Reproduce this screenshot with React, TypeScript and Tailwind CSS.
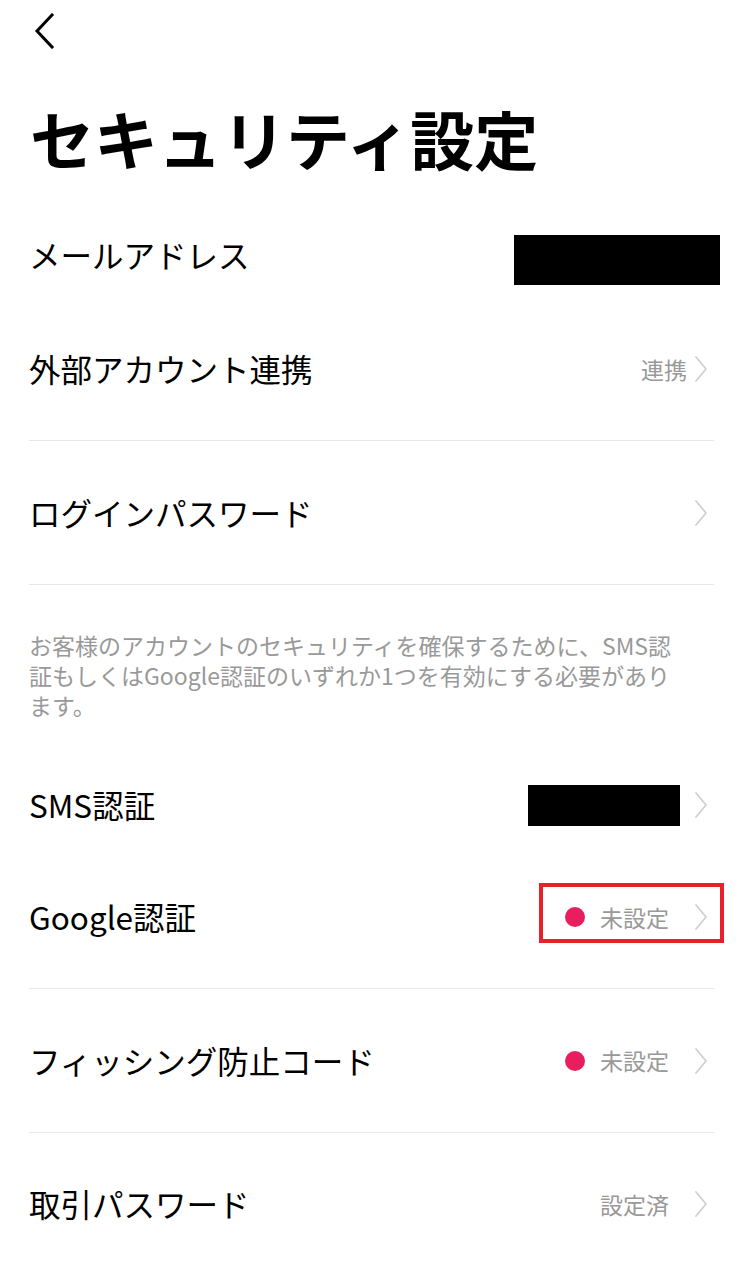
import React from "react";

const font = { fontFamily: '"Noto Sans CJK JP", "Noto Sans", sans-serif' };

function Chevron() {
  return (
    <svg width="16" height="28" viewBox="0 0 16 28" fill="none" className="shrink-0">
      <path d="M3 2 L13 14 L3 26" stroke="#d0d0d0" strokeWidth="1.8" strokeLinecap="round" strokeLinejoin="round" />
    </svg>
  );
}

function Dot() {
  return <span className="inline-block w-[20px] h-[20px] rounded-full bg-[#e91e5f] shrink-0" />;
}

function Divider() {
  return <div className="ml-[29px] mr-[33px] h-px bg-[#e8e8e8]" />;
}

export default function App() {
  return (
    <div className="w-[747px] min-h-[1281px] bg-white text-black" style={font}>
      {/* header */}
      <div className="h-[62px] flex items-center pl-[33px]">
        <svg width="22" height="36" viewBox="0 0 22 36" fill="none">
          <path d="M19 2 L4 18 L19 34" stroke="#000" strokeWidth="3" strokeLinecap="square" />
        </svg>
      </div>
      {/* title */}
      <div className="h-[150px] flex items-center pl-[30px]">
        <h1 className="text-[64px] font-bold leading-none">セキュリティ設定</h1>
      </div>

      {/* email */}
      <div className="h-[86px] flex items-center justify-between pl-[29px] pr-[27px]">
        <span className="text-[31.5px] leading-none">メールアドレス</span>
        <div className="w-[206px] h-[50px] mt-[10px] bg-black" />
      </div>

      {/* external account */}
      <div className="h-[142px] flex items-center justify-between pl-[29px] pr-[38px]">
        <span className="text-[31.5px] leading-none">外部アカウント連携</span>
        <div className="flex items-center gap-[6px]">
          <span className="text-[23px] leading-none text-[#999]">連携</span>
          <Chevron />
        </div>
      </div>
      <Divider />

      {/* login password */}
      <div className="h-[143px] flex items-center justify-between pl-[29px] pr-[38px]">
        <span className="text-[31.5px] leading-none">ログインパスワード</span>
        <Chevron />
      </div>
      <Divider />

      {/* notice */}
      <div className="pt-[45px] pb-[44px] px-[29px] text-[23px] leading-[30px] text-[#999] whitespace-nowrap">
        <div className="h-[30px] leading-[30px]">お客様のアカウントのセキュリティを確保するために、SMS認</div>
        <div className="h-[30px] leading-[30px]">証もしくはGoogle認証のいずれか1つを有効にする必要があり</div>
        <div className="h-[30px] leading-[30px]">ます。</div>
      </div>

      {/* SMS */}
      <div className="h-[82px] flex items-center justify-between pl-[29px] pr-[38px]">
        <span className="text-[31.5px] leading-none">SMS認証</span>
        <div className="flex items-center gap-[13px]">
          <div className="w-[152px] h-[41px] bg-black" />
          <Chevron />
        </div>
      </div>

      {/* Google */}
      <div className="h-[142px] flex items-center justify-between pl-[29px] pr-[38px]">
        <span className="text-[31.5px] leading-none">Google認証</span>
        <div className="relative flex items-center">
          <Dot />
          <span className="ml-[15px] text-[23px] leading-none text-[#999]">未設定</span>
          <span className="ml-[24px]">
            <Chevron />
          </span>
          <div className="absolute left-[-26px] right-[-15px] top-[-20px] bottom-[-12px] border-[4px] border-[#e8202a]" />
        </div>
      </div>
      <Divider />

      {/* phishing */}
      <div className="h-[143px] flex items-center justify-between pl-[29px] pr-[38px]">
        <span className="text-[31.5px] leading-none">フィッシング防止コード</span>
        <div className="flex items-center">
          <Dot />
          <span className="ml-[15px] text-[23px] leading-none text-[#999]">未設定</span>
          <span className="ml-[24px]">
            <Chevron />
          </span>
        </div>
      </div>
      <Divider />

      {/* trade password */}
      <div className="h-[142px] flex items-center justify-between pl-[29px] pr-[38px]">
        <span className="text-[31.5px] leading-none">取引パスワード</span>
        <div className="flex items-center">
          <span className="text-[23px] leading-none text-[#999]">設定済</span>
          <span className="ml-[24px]">
            <Chevron />
          </span>
        </div>
      </div>
    </div>
  );
}
